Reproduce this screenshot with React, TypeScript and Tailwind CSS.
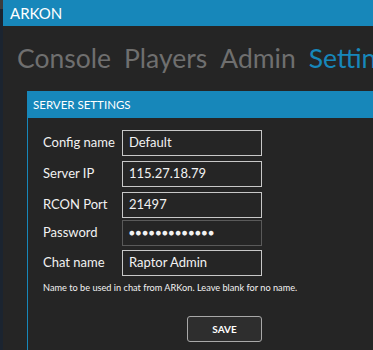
import React from "react";

const font = { fontFamily: 'Lato, "Open Sans", sans-serif' };

function Row({ label, value, mt, password }: { label: string; value: string; mt: string; password?: boolean }) {
  return (
    <div className={`flex items-center ${mt}`}>
      <div className="w-[79px] text-[13px] text-[#f2f2f2]">{label}</div>
      <div
        className={`w-[140px] h-[26px] border flex items-center pl-[6px] text-[13px] text-[#f2f2f2] ${
          password ? "border-[#5a5a5a]" : "border-[#c8c8c8]"
        }`}
      >
        {password ? <span className="text-[9.5px] tracking-[0.9px]">{value}</span> : value}
      </div>
    </div>
  );
}

export default function App() {
  return (
    <div className="w-[373px] h-[350px] overflow-hidden flex bg-[#252525]" style={font}>
      <div className="w-[3px] h-full bg-[#1b2430] flex flex-col">
        <div className="h-[9px] bg-[#3c3c3c]" />
      </div>
      <div className="flex-1 flex flex-col min-w-0">
        <div className="h-[26px] bg-[#1787ba] flex items-center pl-[7px] text-[15px] text-white shrink-0">ARKON</div>
        <div className="h-[65px] flex items-center pl-[14px] whitespace-nowrap text-[26.5px] text-[#6f6f6f] gap-[13px] shrink-0 leading-none overflow-hidden">
          <span>Console</span>
          <span>Players</span>
          <span>Admin</span>
          <span className="text-[#1787ba]">Settings</span>
        </div>
        <div className="ml-[24px] flex-1 border-l border-[#1787ba] flex flex-col">
          <div className="h-[27px] bg-[#1787ba] flex items-center pl-[5px] text-[11.5px] text-white">SERVER SETTINGS</div>
          <div className="pl-[15px] flex flex-col">
            <Row label="Config name" value="Default" mt="mt-[12px]" />
            <Row label="Server IP" value="115.27.18.79" mt="mt-[5px]" />
            <Row label="RCON Port" value="21497" mt="mt-[5px]" />
            <Row label="Password" value="●●●●●●●●●●●●●" mt="mt-[2px]" password />
            <Row label="Chat name" value="Raptor Admin" mt="mt-[4px]" />
            <div className="mt-[6px] text-[9.2px] text-[#f2f2f2] leading-[12px]">
              Name to be used in chat from ARKon. Leave blank for no name.
            </div>
            <div className="mt-[22px] ml-[144px] w-[75px] h-[26px] rounded-[3px] border border-[#a8a8a8] bg-[#2e2e2e] flex items-center justify-center text-[10px] font-bold text-white">
              SAVE
            </div>
          </div>
        </div>
      </div>
    </div>
  );
}
